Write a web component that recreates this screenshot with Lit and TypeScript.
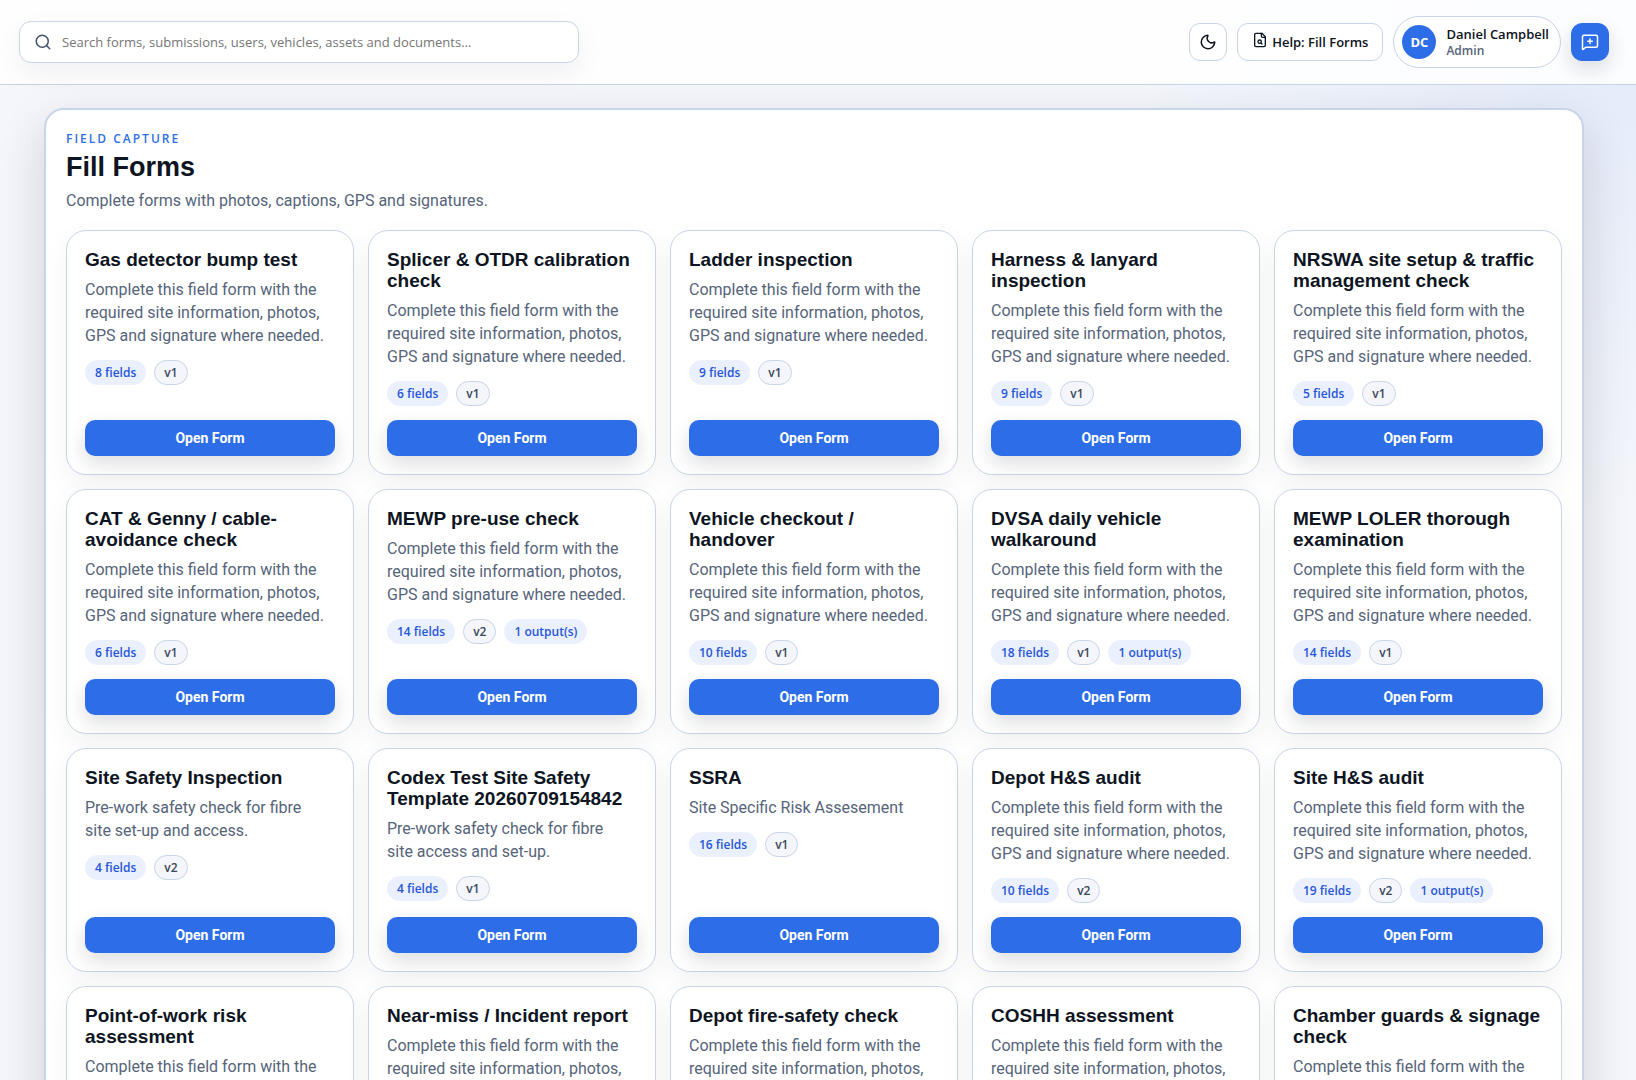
import { LitElement, html, css, svg } from 'lit';
import { customElement, property } from 'lit/decorators.js';

interface FormTemplate {
  title: string;
  description: string;
  fields: number;
  version: number;
  outputs?: number;
}

const DEFAULT_DESCRIPTION =
  'Complete this field form with the required site information, photos, GPS and signature where needed.';

const form = (
  title: string,
  fields: number,
  version = 1,
  outputs = 0,
  description = DEFAULT_DESCRIPTION,
): FormTemplate => ({ title, fields, version, outputs, description });

const FORMS: FormTemplate[] = [
  form('Gas detector bump test', 8),
  form('Splicer & OTDR calibration check', 6),
  form('Ladder inspection', 9),
  form('Harness & lanyard inspection', 9),
  form('NRSWA site setup & traffic management check', 5),
  form('CAT & Genny / cable-avoidance check', 6),
  form('MEWP pre-use check', 14, 2, 1),
  form('Vehicle checkout / handover', 10),
  form('DVSA daily vehicle walkaround', 18, 1, 1),
  form('MEWP LOLER thorough examination', 14),
  form('Site Safety Inspection', 4, 2, 0, 'Pre-work safety check for fibre site set-up and access.'),
  form('Codex Test Site Safety Template 20260709154842', 4, 1, 0, 'Pre-work safety check for fibre site access and set-up.'),
  form('SSRA', 16, 1, 0, 'Site Specific Risk Assesement'),
  form('Depot H&S audit', 10, 2),
  form('Site H&S audit', 19, 2, 1),
  form('Point-of-work risk assessment', 12),
  form('Near-miss / Incident report', 11),
  form('Depot fire-safety check', 9),
  form('COSHH assessment', 10),
  form('Chamber guards & signage check', 7),
];

const icon = (size: number, shapes: unknown) => html`<svg
  class="icon"
  width=${size}
  height=${size}
  viewBox="0 0 24 24"
  fill="none"
  stroke="currentColor"
  stroke-width="2"
  stroke-linecap="round"
  stroke-linejoin="round"
  aria-hidden="true"
>${shapes}</svg>`;

const searchIcon = icon(18, svg`<circle cx="11" cy="11" r="8"/><path d="m21 21-4.34-4.34"/>`);
const moonIcon = icon(18, svg`<path d="M20.985 12.486a9 9 0 1 1-9.473-9.472c.405-.022.617.46.402.803a6 6 0 0 0 8.268 8.268c.344-.215.825-.004.803.401"/>`);
const fileSearchIcon = icon(16, svg`<path d="M15 2H6a2 2 0 0 0-2 2v16a2 2 0 0 0 2 2h12a2 2 0 0 0 2-2V7Z"/><path d="M14 2v4a2 2 0 0 0 2 2h4"/><circle cx="11.5" cy="14.5" r="2.5"/><path d="M13.3 16.3 15 18"/>`);
const messagePlusIcon = icon(18, svg`<path d="M22 17a2 2 0 0 1-2 2H6.828a2 2 0 0 0-1.414.586l-2.202 2.202A.71.71 0 0 1 2 21.286V5a2 2 0 0 1 2-2h16a2 2 0 0 1 2 2z"/><path d="M12 8v6"/><path d="M9 11h6"/>`);

@customElement('form-card')
export class FormCard extends LitElement {
  @property({ attribute: false }) form!: FormTemplate;

  static styles = css`
    :host {
      display: flex;
      flex-direction: column;
      box-sizing: border-box;
      padding: 18px;
      border: 1px solid var(--line);
      border-radius: 20px;
      background: #fff;
      box-shadow: 0 10px 28px rgba(16, 18, 32, 0.05);
    }
    .title {
      margin: 0 0 8px;
      font: 700 19px/21px var(--display);
      color: var(--ink);
    }
    .description {
      margin: 0 0 13px;
      padding-right: 8px;
      line-height: 23px;
      color: var(--muted);
    }
    .pills {
      display: flex;
      flex-wrap: wrap;
      gap: 8px;
      margin-bottom: 14px;
    }
    .pill {
      box-sizing: border-box;
      padding: 0 9px;
      border: 1px solid #eaf0fd;
      border-radius: 13px;
      background: #eaf0fd;
      color: #2756d8;
      font: 600 12px/23px var(--small);
    }
    .pill.version {
      border-color: var(--line);
      background: #f4f6fb;
      color: #3b4759;
    }
    .open {
      width: 100%;
      height: 36px;
      margin-top: auto;
      padding: 0;
      border: 0;
      border-radius: 10px;
      background: var(--brand);
      color: #fff;
      font: 700 14px/20px var(--body);
      box-shadow: 0 8px 20px rgba(16, 18, 32, 0.14);
      cursor: pointer;
    }
  `;

  render() {
    const { title, description, fields, version, outputs } = this.form;
    return html`
      <h2 class="title">${title}</h2>
      <p class="description">${description}</p>
      <div class="pills">
        <span class="pill">${fields} fields</span>
        <span class="pill version">v${version}</span>
        ${outputs ? html`<span class="pill">${outputs} output(s)</span>` : ''}
      </div>
      <button class="open" type="button">Open Form</button>
    `;
  }
}

@customElement('app-root')
export class AppRoot extends LitElement {
  static styles = css`
    :host {
      --brand: #2d6ee8;
      --ink: #0d1422;
      --muted: #56647a;
      --line: #c8d4e8;
      --body: Roboto, 'Liberation Sans', sans-serif;
      --small: 'Open Sans', 'Noto Sans', sans-serif;
      --display: 'Liberation Sans', Arial, sans-serif;
      display: block;
      box-sizing: border-box;
      min-height: 100vh;
      overflow: hidden;
      font: 400 16px/23px var(--body);
      color: var(--ink);
      background:
        radial-gradient(circle at top right, rgba(45, 110, 232, 0.09), transparent 520px),
        #f4f6fb;
    }
    .topbar {
      display: flex;
      align-items: center;
      justify-content: space-between;
      gap: 20px;
      padding: 16px 27px 16px 19px;
      border-bottom: 1px solid var(--line);
      background: rgba(255, 255, 255, 0.88);
    }
    .search {
      display: flex;
      align-items: center;
      gap: 10px;
      flex: 0 1 560px;
      box-sizing: border-box;
      height: 42px;
      padding: 0 14px;
      border: 1px solid var(--line);
      border-radius: 12px;
      background: #fff;
      color: #44516a;
      box-shadow: 0 10px 28px rgba(16, 18, 32, 0.06);
    }
    .search-input {
      flex: 1;
      min-width: 0;
      padding: 0;
      border: 0;
      outline: 0;
      background: none;
      color: var(--ink);
      font: 400 13px/20px var(--small);
    }
    .search-input::placeholder {
      color: #757575;
      opacity: 1;
    }
    .icon {
      display: block;
      flex: none;
    }
    .actions {
      display: flex;
      align-items: center;
      gap: 10px;
    }
    .button {
      display: flex;
      align-items: center;
      justify-content: center;
      box-sizing: border-box;
      height: 38px;
      border: 1px solid var(--line);
      border-radius: 11px;
      background: #fff;
      color: var(--ink);
      font: 600 13px/20px var(--small);
      text-decoration: none;
      cursor: pointer;
    }
    .square {
      width: 38px;
      padding: 0;
    }
    .help {
      gap: 4px;
      padding: 0 14px;
    }
    .help .icon {
      margin-bottom: 4px;
    }
    .feedback {
      border-color: var(--brand);
      background: var(--brand);
      color: #fff;
      box-shadow: 0 8px 20px rgba(16, 18, 32, 0.14);
    }
    .profile {
      display: flex;
      align-items: center;
      gap: 10px;
      box-sizing: border-box;
      height: 52px;
      padding: 0 11px 0 8px;
      border: 1px solid var(--line);
      border-radius: 26px;
      background: #fff;
      text-align: left;
      font: 600 13px/17px var(--small);
      color: var(--ink);
      cursor: pointer;
    }
    .avatar {
      width: 34px;
      border-radius: 50%;
      background: var(--brand);
      color: #fff;
      line-height: 34px;
      text-align: center;
      font-weight: 700;
    }
    .identity {
      display: grid;
    }
    .role {
      font-size: 12px;
      line-height: 15px;
      color: var(--muted);
    }
    .content {
      padding: 23px 8px 48px 0;
    }
    .panel {
      box-sizing: border-box;
      max-width: 1540px;
      margin: 0 auto;
      padding: 20px;
      border: 2px solid var(--line);
      border-radius: 20px;
      background: #fff;
      box-shadow: 0 18px 48px rgba(16, 18, 32, 0.16);
    }
    .eyebrow {
      margin: 0 0 5px;
      font: 700 12px/17px var(--small);
      font-weight: 600;
      letter-spacing: 2px;
      text-transform: uppercase;
      color: var(--brand);
    }
    .heading {
      margin: 0 0 7px;
      font: 700 27px/30px var(--display);
    }
    .lead {
      margin: 0 0 18px;
      color: var(--muted);
    }
    .grid {
      display: grid;
      grid-template-columns: repeat(auto-fill, minmax(270px, 1fr));
      gap: 14px;
    }
  `;

  render() {
    return html`
      <header class="topbar">
        <label class="search">
          ${searchIcon}
          <input
            class="search-input"
            type="search"
            aria-label="Search"
            placeholder="Search forms, submissions, users, vehicles, assets and documents…"
          />
        </label>
        <div class="actions">
          <button class="button square" type="button" aria-label="Toggle dark mode">${moonIcon}</button>
          <a class="button help" href="#help">${fileSearchIcon}<span>Help: Fill Forms</span></a>
          <button class="profile" type="button">
            <span class="avatar">DC</span>
            <span class="identity"><span>Daniel Campbell</span><span class="role">Admin</span></span>
          </button>
          <button class="button square feedback" type="button" aria-label="Send feedback">${messagePlusIcon}</button>
        </div>
      </header>
      <main class="content">
        <section class="panel">
          <p class="eyebrow">Field capture</p>
          <h1 class="heading">Fill Forms</h1>
          <p class="lead">Complete forms with photos, captions, GPS and signatures.</p>
          <div class="grid">${FORMS.map((item) => html`<form-card .form=${item}></form-card>`)}</div>
        </section>
      </main>
    `;
  }
}
